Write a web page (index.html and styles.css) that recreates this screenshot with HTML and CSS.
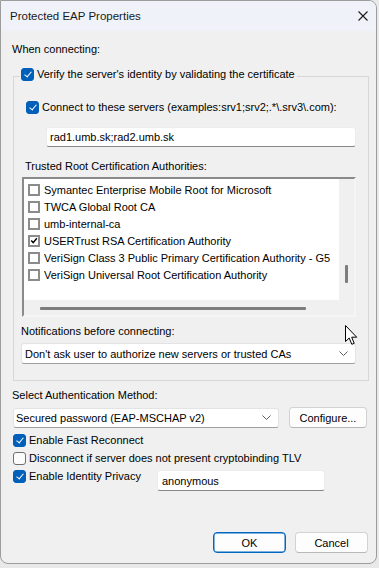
FILE: index.html
```html
<!DOCTYPE html>
<html lang="en">

<head>
    <meta charset="UTF-8">
    <meta name="viewport" content="width=device-width, initial-scale=1.0">
    <title>Protected EAP Properties</title>
    <link rel="stylesheet" href="styles.css">
</head>

<body>
    <div class="window">
        <div class="titlebar">
            <span class="title">Protected EAP Properties</span>
            <svg class="close" width="10" height="10" viewBox="0 0 10 10">
                <path d="M0.5 0.5 L9.5 9.5 M9.5 0.5 L0.5 9.5" stroke="#1a1a1a" stroke-width="1.1" fill="none" />
            </svg>
        </div>

        <div class="content">
            <div class="label first">When connecting:</div>

            <fieldset class="group">
                <legend><span class="chk on"></span>Verify the server's identity by validating the certificate</legend>

                <div class="row servers"><span class="chk on"></span>Connect to these servers (examples:srv1;srv2;.*\.srv3\.com):</div>
                <div class="edit servers-edit">rad1.umb.sk;rad2.umb.sk</div>

                <div class="label trusted">Trusted Root Certification Authorities:</div>
                <div class="listbox">
                    <div class="list-main">
                        <ul class="items">
                            <li><span class="box"></span>Symantec Enterprise Mobile Root for Microsoft</li>
                            <li><span class="box"></span>TWCA Global Root CA</li>
                            <li><span class="box"></span>umb-internal-ca</li>
                            <li><span class="box"><svg width="10" height="10" viewBox="0 0 10 10"><path d="M1.5 4.5 L4 7 L8.5 1.5" stroke="#000" stroke-width="1.8" fill="none" /></svg></span>USERTrust RSA Certification Authority</li>
                            <li><span class="box"></span>VeriSign Class 3 Public Primary Certification Authority - G5</li>
                            <li><span class="box"></span>VeriSign Universal Root Certification Authority</li>
                        </ul>
                        <div class="vscroll"><span class="thumb"></span></div>
                    </div>
                    <div class="hscroll"><span class="thumb"></span></div>
                </div>

                <div class="label notif">Notifications before connecting:</div>
                <div class="combo notif-combo">
                    <span>Don't ask user to authorize new servers or trusted CAs</span>
                    <svg width="9" height="5" viewBox="0 0 9 5"><path d="M0.5 0.5 L4.5 4.5 L8.5 0.5" stroke="#5c5c5c" fill="none" /></svg>
                </div>
            </fieldset>

            <div class="label method">Select Authentication Method:</div>
            <div class="method-row">
                <div class="combo method-combo">
                    <span>Secured password (EAP-MSCHAP v2)</span>
                    <svg width="9" height="5" viewBox="0 0 9 5"><path d="M0.5 0.5 L4.5 4.5 L8.5 0.5" stroke="#5c5c5c" fill="none" /></svg>
                </div>
                <button class="btn configure">Configure...</button>
            </div>

            <div class="options">
                <div class="row opt"><span class="chk on"></span>Enable Fast Reconnect</div>
                <div class="row opt"><span class="chk"></span>Disconnect if server does not present cryptobinding TLV</div>
                <div class="row opt identity">
                    <span class="identity-label"><span class="chk on"></span>Enable Identity Privacy</span>
                    <div class="edit identity-edit">anonymous</div>
                </div>
            </div>

            <div class="actions">
                <button class="btn ok">OK</button>
                <button class="btn">Cancel</button>
            </div>
        </div>

        <!-- mouse pointer hovering over the dialog -->
        <svg class="cursor" width="13" height="21" viewBox="0 0 13 21">
            <path d="M0.5 0.5 L0.5 16.5 L4.2 13 L6.8 19.3 L9.2 18.3 L6.7 12.2 L11.7 12.2 Z" fill="#fff" stroke="#000" stroke-width="1" stroke-linejoin="round" />
        </svg>
    </div>
</body>

</html>
```

FILE: styles.css
```css
body {
    margin: 0;
    background: #e9e9e9;
    font-family: "Liberation Sans", Arial, sans-serif;
    font-size: 11px;
    color: #000;
}

.window {
    position: relative;
    width: 377px;
    height: 564px;
    box-sizing: border-box;
    background: #f0f0f0;
    border: 1px solid #9c9c9c;
    border-radius: 0 8px 8px 8px;
    overflow: hidden;
}

.titlebar {
    height: 30px;
    background: #eff3f9;
    display: flex;
    align-items: center;
    justify-content: space-between;
    padding: 0 8px 0 9px;
}

.title {
    font-size: 11.5px;
    color: #1a1a1a;
}

.close {
    display: block;
    margin-top: -1px;
}

.content {
    padding: 10px 8px 0 11px;
}

.label {
    line-height: 16px;
    height: 16px;
}

.first {
    margin-bottom: 9px;
}

.chk {
    display: inline-block;
    width: 13px;
    height: 13px;
    box-sizing: border-box;
    border: 1px solid #6f6f6f;
    border-radius: 3px;
    background: #fbfbfb;
    position: relative;
    flex: none;
    margin-right: 3px;
}

.chk.on {
    background: #005fb8;
    border-color: #005fb8;
}

.chk.on::after {
    content: "";
    position: absolute;
    left: 4px;
    top: 1.5px;
    width: 3px;
    height: 6px;
    border: solid #fff;
    border-width: 0 1.2px 1.2px 0;
    transform: rotate(40deg);
}

.group {
    margin: 0 -1px 0 1px;
    padding: 0 0 16px 0;
    border: 1px solid #d7d7d7;
    min-width: 0;
}

.group legend {
    display: flex;
    align-items: center;
    line-height: 16px;
    padding: 0 2px 4px 1px;
    margin-left: 6px;
}

.row {
    display: flex;
    align-items: center;
    height: 18px;
}

.servers {
    margin: 13px 0 0 12px;
    height: 16px;
}

.edit {
    background: #fff;
    border: 1px solid #ececec;
    border-bottom-color: #868686;
    border-radius: 3px;
    box-sizing: border-box;
    padding-left: 3px;
    display: flex;
    align-items: center;
}

.servers-edit {
    margin: 12px 0 0 32px;
    width: 310px;
    height: 20px;
}

.trusted {
    margin: 11px 0 0 11px;
}

.listbox {
    margin: 3px 0 0 8px;
    width: 334px;
    height: 140px;
    box-sizing: border-box;
    border: 2px solid #f5f5f5;
    border-top-color: #8a8a8a;
    border-left-color: #8a8a8a;
    background: #f0f0f0;
    display: flex;
    flex-direction: column;
}

.list-main {
    display: flex;
    height: 121px;
}

.items {
    list-style: none;
    margin: 0;
    padding: 2px 0 0 4px;
    width: 315px;
    box-sizing: border-box;
    background: #fff;
    white-space: nowrap;
    overflow: hidden;
}

.items li {
    display: flex;
    align-items: center;
    height: 17px;
}

.box {
    width: 12px;
    height: 12px;
    box-sizing: border-box;
    border: 2px solid #8c8c8c;
    background: #fff;
    margin-right: 4px;
    display: flex;
    align-items: center;
    justify-content: center;
    flex: none;
}

.box svg {
    display: block;
}

.vscroll {
    flex: 1;
    display: flex;
    justify-content: center;
    padding-top: 86px;
}

.vscroll .thumb {
    width: 3px;
    height: 18px;
    background: #7d7d7d;
    border-radius: 1px;
}

.hscroll {
    flex: 1;
    padding: 7px 0 0 16px;
}

.hscroll .thumb {
    display: block;
    width: 266px;
    height: 3px;
    background: #7d7d7d;
    border-radius: 1px;
}

.notif {
    margin: 6px 0 0 7px;
}

.combo {
    background: #fff;
    border: 1px solid #e3e3e3;
    border-bottom-color: #a0a0a0;
    border-radius: 3px;
    box-sizing: border-box;
    display: flex;
    align-items: center;
    justify-content: space-between;
    padding: 0 7px 0 3px;
}

.notif-combo {
    margin: 4px 0 0 7px;
    width: 335px;
    height: 21px;
}

.method {
    margin-top: 6px;
}

.method-row {
    display: flex;
    align-items: center;
    margin: 4px 0 0 1px;
    gap: 10px;
}

.method-combo {
    width: 266px;
    height: 20px;
    padding-left: 2px;
}

.btn {
    font: inherit;
    color: #000;
    background: #fdfdfd;
    border: 1px solid #d2d2d2;
    border-bottom-color: #b8b8b8;
    border-radius: 4px;
    height: 21px;
    padding: 0;
    box-sizing: border-box;
}

.configure {
    width: 78px;
}

.options {
    margin: 3px 0 0 1px;
}

.identity {
    align-items: flex-start;
}

.identity-label {
    display: flex;
    align-items: center;
    width: 144px;
    height: 18px;
}

.identity-edit {
    margin-top: 3px;
    width: 168px;
    height: 21px;
    padding-left: 4px;
}

.actions {
    display: flex;
    justify-content: flex-end;
    gap: 9px;
    margin-top: 47px;
}

.actions .btn {
    width: 73px;
}

.btn.ok {
    border: 1px solid #0067c0;
    box-shadow: inset 0 0 0 0.5px #0067c0;
}

.cursor {
    position: absolute;
    left: 344px;
    top: 324px;
}
```
